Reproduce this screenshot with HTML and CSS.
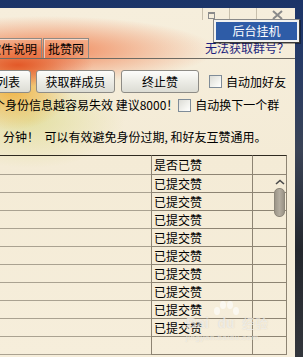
FILE: index.html
```html
<!DOCTYPE html>
<html lang="zh-CN">
<head>
<meta charset="utf-8">
<title>批赞</title>
<link rel="stylesheet" href="styles.css">
</head>
<body>
<div class="desk">
  <div class="window">
    <div class="caption">
      <span class="cb"><span class="ico-box"></span></span>
      <span class="cb"></span>
      <span class="cb">
        <svg class="ico-x" width="11" height="10" viewBox="0 0 11 10"><path d="M1 1 L10 9 M10 1 L1 9" stroke="#8a8a8a" stroke-width="2" fill="none"/></svg>
      </span>
    </div>
    <div class="tabrow">
      <div class="tabs">
        <span class="tab tab-cut">软件说明</span>
        <span class="tab">批赞网</span>
      </div>
      <span class="help">无法获取群号？</span>
    </div>
    <div class="panel">
      <div class="toolbar">
        <button class="btn btn-cut">群列表</button>
        <button class="btn btn-wide">获取群成员</button>
        <button class="btn btn-wide">终止赞</button>
        <label class="chk chk-first"><span class="box"></span>自动加好友</label>
      </div>
      <div class="line line2"><span class="txt">个身份信息越容易失效 建议8000！</span><label class="chk"><span class="box"></span>自动换下一个群</label></div>
      <div class="line line3">分钟！  可以有效避免身份过期, 和好友互赞通用。</div>
      <div class="grid">
        <div class="row head"><span class="c a"></span><span class="c b">是否已赞</span><span class="c z"></span></div>
        <div class="row"><span class="c a"></span><span class="c b">已提交赞</span><span class="c z"></span></div>
        <div class="row"><span class="c a"></span><span class="c b">已提交赞</span><span class="c z"></span></div>
        <div class="row"><span class="c a"></span><span class="c b">已提交赞</span><span class="c z"></span></div>
        <div class="row"><span class="c a"></span><span class="c b">已提交赞</span><span class="c z"></span></div>
        <div class="row"><span class="c a"></span><span class="c b">已提交赞</span><span class="c z"></span></div>
        <div class="row"><span class="c a"></span><span class="c b">已提交赞</span><span class="c z"></span></div>
        <div class="row"><span class="c a"></span><span class="c b">已提交赞</span><span class="c z"></span></div>
        <div class="row"><span class="c a"></span><span class="c b">已提交赞</span><span class="c z"></span></div>
        <div class="row"><span class="c a"></span><span class="c b">已提交赞</span><span class="c z"></span></div>
        <div class="row"><span class="c a"></span><span class="c b"></span><span class="c z"></span></div>
        <div class="scroll">
          <svg class="arrow" width="10" height="6" viewBox="0 0 10 6"><path d="M1 5 L5 1.5 L9 5" stroke="#4a4a4a" stroke-width="1.6" fill="none"/></svg>
          <span class="thumb"></span>
        </div>
      </div>
    </div>
  </div>
  <div class="edge"></div>
</div>
<div class="menu"><div class="mi">后台挂机</div></div>
<div class="wm">
  <div class="wm-main">
    <span class="wm-bai">Bai</span>
    <span class="wm-paw">
      <svg width="28" height="16" viewBox="0 0 28 16"><ellipse cx="5" cy="10" rx="3" ry="4" fill="rgba(255,255,255,0.6)"/><ellipse cx="11" cy="4" rx="3" ry="4" fill="rgba(255,255,255,0.6)"/><ellipse cx="18" cy="4" rx="3" ry="4" fill="rgba(255,255,255,0.6)"/><ellipse cx="24" cy="10" rx="3" ry="4" fill="rgba(255,255,255,0.6)"/></svg>
      <span class="wm-du">du</span>
    </span>
    <span class="wm-jy">经验</span>
  </div>
  <div class="wm-url">jingyan.baidu.com</div>
</div>
</body>
</html>
```
FILE: styles.css
```css
html, body {
  margin: 0;
  padding: 0;
}
body {
  width: 303px;
  height: 357px;
  overflow: hidden;
  position: relative;
  font-family: "Noto Sans CJK SC", "Noto Sans", sans-serif;
  font-size: 12px;
  color: #000;
  background: linear-gradient(180deg, #1b3468 0, #22396a 40px, #3a4356 150px, #24272d 250px, #33363c 357px);
}
.desk {
  display: flex;
  padding-top: 8px;
  height: 349px;
}
.window {
  width: 295px;
  height: 349px;
  flex: none;
  background:
    radial-gradient(ellipse 75px 22px at 18px 57px, rgba(226, 84, 36, 0.95), rgba(226, 84, 36, 0)),
    radial-gradient(ellipse 170px 34px at 45px 42px, rgba(240, 128, 80, 0.95), rgba(240, 128, 80, 0)),
    radial-gradient(ellipse 60px 42px at 12px 80px, rgba(240, 176, 60, 0.95), rgba(240, 176, 60, 0)),
    radial-gradient(ellipse 95px 48px at 30px 112px, rgba(214, 214, 120, 0.55), rgba(214, 214, 120, 0)),
    linear-gradient(180deg, #f6eedc 0, #f4ebd6 150px, #f6eedb 349px);
}
.edge {
  flex: 1;
}

/* caption buttons */
.caption {
  height: 30px;
  display: flex;
  justify-content: flex-end;
  align-items: flex-start;
  padding-right: 12px;
  box-sizing: border-box;
}
.cb {
  width: 27px;
  height: 12px;
  box-sizing: border-box;
  border-left: 1px solid #c8bfac;
  display: flex;
  align-items: flex-start;
}
.ico-box {
  width: 7px;
  height: 7px;
  box-sizing: border-box;
  border: 1px solid #8c8c8c;
  border-top-width: 2px;
  margin: 4px 0 0 5px;
}
.ico-x {
  margin: 2px 0 0 15px;
}

/* tabs */
.tabrow {
  height: 21px;
  box-sizing: border-box;
  border-bottom: 1px solid #6e6a62;
  display: flex;
  justify-content: space-between;
  align-items: flex-end;
  padding-right: 6px;
}
.tabs {
  display: flex;
  gap: 1px;
  align-items: flex-end;
}
.tab {
  height: 20px;
  box-sizing: border-box;
  border: 1px solid #8f8a84;
  border-bottom: none;
  box-shadow: inset 1px 1px 0 rgba(255, 255, 255, 0.55);
  padding: 0 4px;
  line-height: 19px;
  white-space: nowrap;
}
.tab-cut {
  margin-left: -16px;
}
.help {
  color: #1d1f7e;
  line-height: 20px;
  align-self: center;
  white-space: nowrap;
}

/* panel */
.panel {
  padding-top: 11px;
}
.toolbar {
  display: flex;
  align-items: center;
  height: 23px;
  gap: 5px;
}
.btn {
  height: 23px;
  box-sizing: border-box;
  border: 1px solid #8e8c86;
  border-radius: 3px;
  background: linear-gradient(180deg, #fdfdfb 0, #eeeee8 45%, #dcdcd4 100%);
  font-family: inherit;
  font-size: 12px;
  color: #000;
  padding: 0;
  line-height: 21px;
  white-space: nowrap;
}
.btn-cut {
  width: 58px;
  margin-left: -27px;
}
.btn-wide {
  width: 79px;
}
.btn-wide + .btn-wide {
  margin-left: 1px;
  width: 78px;
}
.chk {
  display: flex;
  align-items: center;
  white-space: nowrap;
}
.chk-first {
  margin-left: 5px;
}
.box {
  width: 13px;
  height: 13px;
  box-sizing: border-box;
  border: 1px solid #7f8c98;
  background: linear-gradient(135deg, #dcdcd6 0, #f6f6f2 70%, #ffffff 100%);
  margin-right: 4px;
  flex: none;
}
.line {
  height: 16px;
  line-height: 16px;
  white-space: pre;
}
.line2 {
  margin-top: 4px;
  margin-left: -7px;
  display: flex;
  align-items: center;
}
.line3 {
  margin-top: 16px;
  padding-left: 3px;
}

/* grid */
.grid {
  margin-top: 10px;
  width: 287px;
  position: relative;
}
.row {
  display: grid;
  grid-template-columns: 151px 101px 35px;
  height: 18px;
}
.c {
  box-sizing: border-box;
  border-bottom: 1px solid #8d8473;
  line-height: 17px;
  white-space: nowrap;
}
.c.a {
  border-bottom-color: #aaa291;
}
.c.b {
  border-left: 1px solid #8d8473;
  padding-left: 2px;
}
.c.z {
  border-left: 1px solid #8d8473;
  border-right: 1px solid #8d8473;
}
.row.head {
  height: 20px;
}
.row.head .c {
  border-top: 1px solid #2f2a20;
  line-height: 18px;
}
.scroll {
  position: absolute;
  left: 273px;
  top: 24px;
  width: 12px;
  display: flex;
  flex-direction: column;
  align-items: center;
}
.arrow {
  margin-left: 1px;
}
.thumb {
  margin-top: 3px;
  width: 11px;
  height: 29px;
  box-sizing: border-box;
  border: 1px solid #8d877a;
  border-radius: 5px;
  background: linear-gradient(90deg, #9c9588 0, #b4ada0 50%, #9a9386 100%);
}

/* popup menu */
.menu {
  position: absolute;
  left: 213px;
  top: 19px;
  width: 87px;
  box-sizing: border-box;
  border: 1px solid #8a8a8a;
  border-right-color: #3a3a3a;
  border-bottom-color: #3a3a3a;
  background: #f2f2f0;
  padding: 2px;
  box-shadow: 1px 1px 0 rgba(0, 0, 0, 0.35);
}
.mi {
  height: 18px;
  line-height: 18px;
  background: #2e5ca7;
  color: #fff;
  text-align: center;
  font-size: 12px;
}

/* watermark */
.wm {
  position: absolute;
  left: 186px;
  top: 302px;
  width: 92px;
  color: rgba(255, 255, 255, 0.6);
  font-family: "Liberation Sans", "Noto Sans CJK SC", sans-serif;
  text-shadow: 0 0 1px rgba(150, 140, 120, 0.35);
}
.wm-main {
  display: flex;
  align-items: flex-end;
  height: 28px;
}
.wm-bai {
  font-size: 15px;
  font-weight: bold;
  line-height: 15px;
}
.wm-paw {
  display: flex;
  flex-direction: column;
  align-items: center;
  width: 28px;
  margin-left: 3px;
}
.wm-du {
  font-size: 14px;
  font-weight: bold;
  line-height: 13px;
}
.wm-jy {
  font-size: 13px;
  line-height: 14px;
  margin-left: 2px;
  font-family: "Noto Sans CJK SC", sans-serif;
}
.wm-url {
  font-size: 8px;
  line-height: 10px;
  margin-top: 3px;
  letter-spacing: 0.5px;
}
```
